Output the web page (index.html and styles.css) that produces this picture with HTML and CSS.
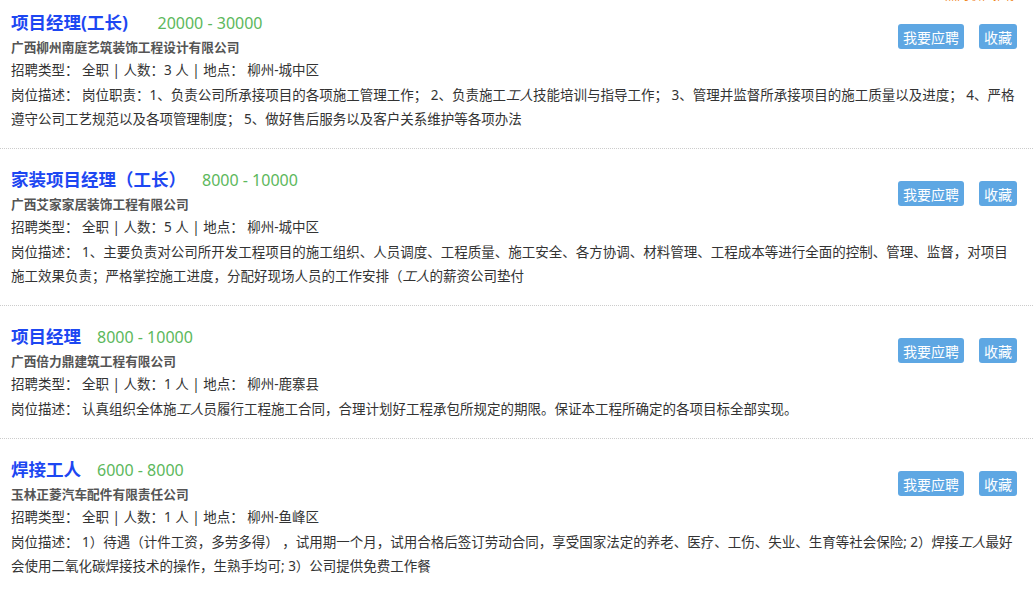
FILE: index.html
```html
<!DOCTYPE html>
<html lang="zh-CN">
<head>
    <meta charset="UTF-8">
    <meta name="viewport" content="width=device-width, initial-scale=1.0">
    <title>招聘职位</title>
    <link rel="stylesheet" href="styles.css">
</head>
<body>
    <div class="top-note"><span>热门职位推荐</span></div>

    <div class="job-list">
        <div class="job">
            <div class="job-head">
                <div class="job-main">
                    <div class="job-title"><a href="#">项目经理(工长)&nbsp;&nbsp;&nbsp;</a><span class="salary">20000 - 30000</span></div>
                    <div class="company">广西柳州南庭艺筑装饰工程设计有限公司</div>
                </div>
                <div class="actions">
                    <button class="btn">我要应聘</button>
                    <button class="btn">收藏</button>
                </div>
            </div>
            <div class="info">招聘类型： 全职 | 人数：3 人 | 地点： 柳州-城中区</div>
            <div class="desc">岗位描述： 岗位职责：1、负责公司所承接项目的各项施工管理工作； 2、负责施工<em>工人</em>技能培训与指导工作； 3、管理并监督所承接项目的施工质量以及进度； 4、严格遵守公司工艺规范以及各项管理制度； 5、做好售后服务以及客户关系维护等各项办法</div>
        </div>

        <div class="job">
            <div class="job-head">
                <div class="job-main">
                    <div class="job-title"><a href="#">家装项目经理（工长）</a><span class="salary">8000 - 10000</span></div>
                    <div class="company">广西艾家家居装饰工程有限公司</div>
                </div>
                <div class="actions">
                    <button class="btn">我要应聘</button>
                    <button class="btn">收藏</button>
                </div>
            </div>
            <div class="info">招聘类型： 全职 | 人数：5 人 | 地点： 柳州-城中区</div>
            <div class="desc">岗位描述： 1、主要负责对公司所开发工程项目的施工组织、人员调度、工程质量、施工安全、各方协调、材料管理、工程成本等进行全面的控制、管理、监督，对项目施工效果负责；严格掌控施工进度，分配好现场人员的工作安排（<em>工人</em>的薪资公司垫付</div>
        </div>

        <div class="job">
            <div class="job-head">
                <div class="job-main">
                    <div class="job-title"><a href="#">项目经理</a><span class="salary">8000 - 10000</span></div>
                    <div class="company">广西倍力鼎建筑工程有限公司</div>
                </div>
                <div class="actions">
                    <button class="btn">我要应聘</button>
                    <button class="btn">收藏</button>
                </div>
            </div>
            <div class="info">招聘类型： 全职 | 人数：1 人 | 地点： 柳州-鹿寨县</div>
            <div class="desc">岗位描述： 认真组织全体施<em>工人</em>员履行工程施工合同，合理计划好工程承包所规定的期限。保证本工程所确定的各项目标全部实现。</div>
        </div>

        <div class="job">
            <div class="job-head">
                <div class="job-main">
                    <div class="job-title"><a href="#">焊接工人</a><span class="salary">6000 - 8000</span></div>
                    <div class="company">玉林正菱汽车配件有限责任公司</div>
                </div>
                <div class="actions">
                    <button class="btn">我要应聘</button>
                    <button class="btn">收藏</button>
                </div>
            </div>
            <div class="info">招聘类型： 全职 | 人数：1 人 | 地点： 柳州-鱼峰区</div>
            <div class="desc">岗位描述： 1）待遇（计件工资，多劳多得） ，试用期一个月，试用合格后签订劳动合同，享受国家法定的养老、医疗、工伤、失业、生育等社会保险; 2）焊接<em>工人</em>最好会使用二氧化碳焊接技术的操作，生熟手均可; 3）公司提供免费工作餐</div>
        </div>
    </div>
</body>
</html>
```

FILE: styles.css
```css
body {
    margin: 0;
    font-family: "Noto Sans", "Noto Sans CJK SC", sans-serif;
    color: #333;
    background-color: #fff;
}
.top-note {
    height: 2px;
    overflow: hidden;
    display: flex;
    justify-content: flex-end;
    align-items: flex-end;
    padding-right: 16px;
}
.top-note span {
    font-size: 12px;
    line-height: 12px;
    color: #f08519;
}
.job {
    padding: 17px 16px 17px 11px;
    border-bottom: 1px dotted #ccc;
}
.job:first-child {
    padding-top: 7px;
}
.job-head {
    display: flex;
    justify-content: space-between;
    align-items: flex-start;
}
.job-title {
    line-height: 26px;
}
.job-title a {
    font-size: 17.5px;
    font-weight: bold;
    color: #1d47f2;
    text-decoration: none;
    margin-right: 16px;
}
.salary {
    font-size: 16px;
    color: #5cb85c;
}
.company {
    font-size: 12.7px;
    font-weight: bold;
    color: #555;
    line-height: 22px;
}
.actions {
    display: flex;
    gap: 15px;
    margin-top: 15px;
}
.btn {
    height: 25px;
    padding: 0 5px;
    font-family: "Noto Sans CJK SC", sans-serif;
    font-size: 14px;
    color: #fff;
    background-color: #5ea7e3;
    border: none;
    border-radius: 3px;
    cursor: pointer;
}
.info {
    font-size: 13.5px;
    line-height: 25px;
}
.desc {
    font-size: 13.5px;
    line-height: 24px;
}
.desc em {
    font-style: italic;
}
```
